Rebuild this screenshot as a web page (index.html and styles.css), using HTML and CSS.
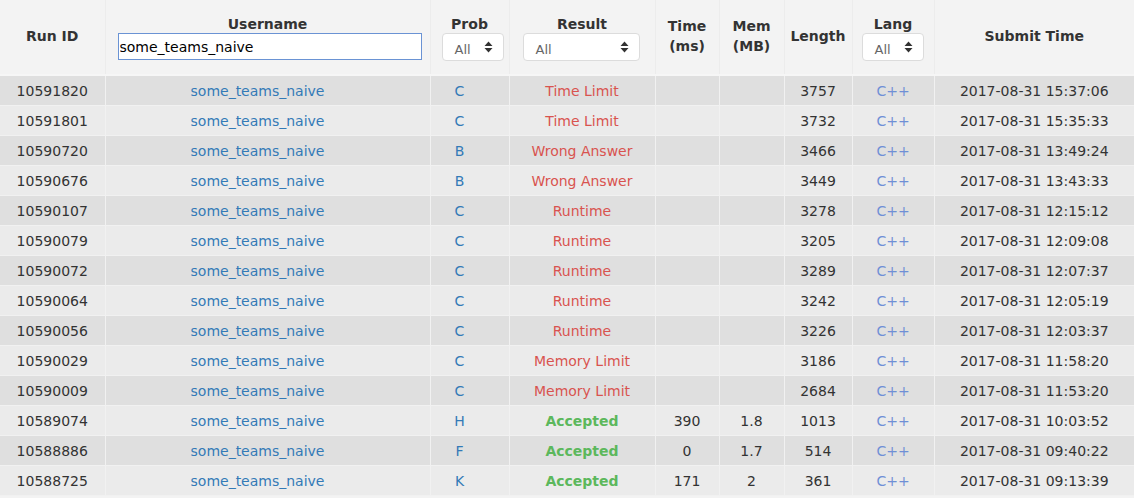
FILE: index.html
```html
<!DOCTYPE html>
<html>
<head>
<meta charset="utf-8">
<link rel="stylesheet" href="styles.css">
</head>
<body>
<table class="status">
  <colgroup>
    <col class="c-id"><col class="c-user"><col class="c-prob"><col class="c-res"><col class="c-time"><col class="c-mem"><col class="c-len"><col class="c-lang"><col class="c-sub">
  </colgroup>
  <thead>
    <tr>
      <th>Run ID</th>
      <th><div class="lbl">Username</div><input class="user-input" type="text" value="some_teams_naive"></th>
      <th><div class="lbl">Prob</div><div class="sel sel-sm sel-prob"><span>All</span><svg class="caret" width="9" height="12" viewBox="0 0 9 12"><path d="M4.5 0.5 L8.5 5 L0.5 5 Z M0.5 7 L8.5 7 L4.5 11.5 Z" fill="#333"/></svg></div></th>
      <th><div class="lbl">Result</div><div class="sel sel-lg"><span>All</span><svg class="caret" width="9" height="12" viewBox="0 0 9 12"><path d="M4.5 0.5 L8.5 5 L0.5 5 Z M0.5 7 L8.5 7 L4.5 11.5 Z" fill="#333"/></svg></div></th>
      <th>Time<br>(ms)</th>
      <th>Mem<br>(MB)</th>
      <th>Length</th>
      <th><div class="lbl">Lang</div><div class="sel sel-sm sel-lang"><span>All</span><svg class="caret" width="9" height="12" viewBox="0 0 9 12"><path d="M4.5 0.5 L8.5 5 L0.5 5 Z M0.5 7 L8.5 7 L4.5 11.5 Z" fill="#333"/></svg></div></th>
      <th>Submit Time</th>
    </tr>
  </thead>
  <tbody>
    <tr><td>10591820</td><td class="off"><a>some_teams_naive</a></td><td class="off"><a>C</a></td><td class="bad">Time Limit</td><td></td><td></td><td>3757</td><td class="lang">C++</td><td>2017-08-31 15:37:06</td></tr>
    <tr><td>10591801</td><td class="off"><a>some_teams_naive</a></td><td class="off"><a>C</a></td><td class="bad">Time Limit</td><td></td><td></td><td>3732</td><td class="lang">C++</td><td>2017-08-31 15:35:33</td></tr>
    <tr><td>10590720</td><td class="off"><a>some_teams_naive</a></td><td class="off"><a>B</a></td><td class="bad">Wrong Answer</td><td></td><td></td><td>3466</td><td class="lang">C++</td><td>2017-08-31 13:49:24</td></tr>
    <tr><td>10590676</td><td class="off"><a>some_teams_naive</a></td><td class="off"><a>B</a></td><td class="bad">Wrong Answer</td><td></td><td></td><td>3449</td><td class="lang">C++</td><td>2017-08-31 13:43:33</td></tr>
    <tr><td>10590107</td><td class="off"><a>some_teams_naive</a></td><td class="off"><a>C</a></td><td class="bad">Runtime</td><td></td><td></td><td>3278</td><td class="lang">C++</td><td>2017-08-31 12:15:12</td></tr>
    <tr><td>10590079</td><td class="off"><a>some_teams_naive</a></td><td class="off"><a>C</a></td><td class="bad">Runtime</td><td></td><td></td><td>3205</td><td class="lang">C++</td><td>2017-08-31 12:09:08</td></tr>
    <tr><td>10590072</td><td class="off"><a>some_teams_naive</a></td><td class="off"><a>C</a></td><td class="bad">Runtime</td><td></td><td></td><td>3289</td><td class="lang">C++</td><td>2017-08-31 12:07:37</td></tr>
    <tr><td>10590064</td><td class="off"><a>some_teams_naive</a></td><td class="off"><a>C</a></td><td class="bad">Runtime</td><td></td><td></td><td>3242</td><td class="lang">C++</td><td>2017-08-31 12:05:19</td></tr>
    <tr><td>10590056</td><td class="off"><a>some_teams_naive</a></td><td class="off"><a>C</a></td><td class="bad">Runtime</td><td></td><td></td><td>3226</td><td class="lang">C++</td><td>2017-08-31 12:03:37</td></tr>
    <tr><td>10590029</td><td class="off"><a>some_teams_naive</a></td><td class="off"><a>C</a></td><td class="bad">Memory Limit</td><td></td><td></td><td>3186</td><td class="lang">C++</td><td>2017-08-31 11:58:20</td></tr>
    <tr><td>10590009</td><td class="off"><a>some_teams_naive</a></td><td class="off"><a>C</a></td><td class="bad">Memory Limit</td><td></td><td></td><td>2684</td><td class="lang">C++</td><td>2017-08-31 11:53:20</td></tr>
    <tr><td>10589074</td><td class="off"><a>some_teams_naive</a></td><td class="off"><a>H</a></td><td class="ok">Accepted</td><td>390</td><td>1.8</td><td>1013</td><td class="lang">C++</td><td>2017-08-31 10:03:52</td></tr>
    <tr><td>10588886</td><td class="off"><a>some_teams_naive</a></td><td class="off"><a>F</a></td><td class="ok">Accepted</td><td>0</td><td>1.7</td><td>514</td><td class="lang">C++</td><td>2017-08-31 09:40:22</td></tr>
    <tr><td>10588725</td><td class="off"><a>some_teams_naive</a></td><td class="off"><a>K</a></td><td class="ok">Accepted</td><td>171</td><td>2</td><td>361</td><td class="lang">C++</td><td>2017-08-31 09:13:39</td></tr>
  </tbody>
</table>
</body>
</html>
```
FILE: styles.css
```css
html, body {
  margin: 0;
  padding: 0;
  background: #f3f3f3;
}
body {
  font-family: "DejaVu Sans", Verdana, sans-serif;
  font-size: 14px;
  color: #333;
}
.status {
  width: 1134px;
  border-collapse: collapse;
  table-layout: fixed;
}
.c-id { width: 105px; }
.c-user { width: 325px; }
.c-prob { width: 79px; }
.c-res { width: 146px; }
.c-time { width: 64px; }
.c-mem { width: 65px; }
.c-len { width: 68px; }
.c-lang { width: 82px; }
.c-sub { width: 200px; }

thead th {
  height: 72px;
  padding: 0 0 2px 0;
  background: #f3f3f3;
  font-weight: bold;
  font-size: 14px;
  line-height: 20px;
  color: #333;
  text-align: center;
  vertical-align: middle;
  border-left: 1px solid #ececec;
  border-right: 1px solid #ececec;
  border-bottom: 2px solid #f6f6f6;
}
thead th:first-child { border-left: none; }
thead th:last-child { border-right: none; }
.lbl {
  line-height: 18px;
  margin-top: 3px;
  margin-bottom: 0;
}
.user-input {
  display: block;
  box-sizing: border-box;
  width: 304px;
  height: 27px;
  margin: 0 0 0 12px;
  padding: 0 1px;
  border: 1px solid #6a93d4;
  border-radius: 0;
  background: #fff;
  font-family: "DejaVu Sans", Verdana, sans-serif;
  font-size: 14px;
  color: #000;
  outline: none;
}
.sel {
  box-sizing: border-box;
  height: 28px;
  margin: 0 auto;
  display: flex;
  align-items: center;
  justify-content: space-between;
  background: #fff;
  border: 1px solid #dcdcdc;
  border-radius: 4px;
  font-weight: normal;
  font-size: 13px;
  color: #666;
  padding: 6px 10px 0 12px;
}
.sel span { line-height: 18px; }
.sel .caret { margin-top: -6px; }
.sel-sm { width: 62px; }
.sel-lg { width: 117px; margin-left: 13px; }
.sel-prob { margin-left: 11px; }
.sel-lang { margin-left: 9px; }

tbody td {
  height: 29px;
  padding: 0;
  text-align: center;
  vertical-align: middle;
  font-size: 14px;
  color: #333;
  border: 1px solid #f1f1f1;
  white-space: nowrap;
}
tbody td.off { padding-right: 20px; }
tbody td:first-child { border-left: none; }
tbody td:last-child { border-right: none; }
tbody tr:nth-child(odd) td { background: #dfdfdf; }
tbody tr:nth-child(even) td { background: #ebebeb; }
tbody a { color: #337ab7; }
.bad { color: #d9534f; }
.ok { color: #5cb85c; font-weight: bold; }
.lang { color: #6f8fd6; }
```
